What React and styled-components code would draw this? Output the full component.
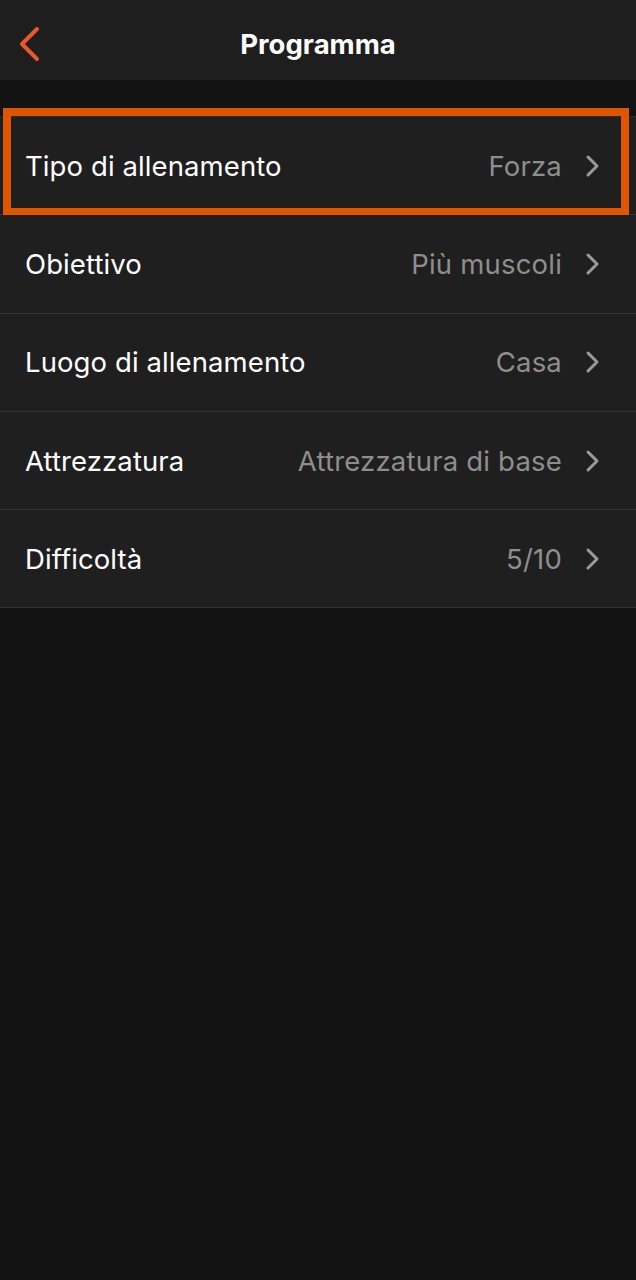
import React from 'react';
import styled, { createGlobalStyle } from 'styled-components';

const GlobalStyle = createGlobalStyle`
  html, body {
    margin: 0;
    padding: 0;
    background: #121212;
    font-family: Inter, "Noto Sans", sans-serif;
  }
`;

const Page = styled.div`
  min-height: 1280px;
  background: #121212;
`;

const Header = styled.header`
  height: 80px;
  box-sizing: border-box;
  padding-top: 8px;
  background: #1e1e1e;
  display: flex;
  align-items: center;
  justify-content: center;
  position: relative;
`;

const BackButton = styled.button`
  position: absolute;
  left: 16px;
  top: 26px;
  width: 26px;
  height: 36px;
  padding: 0;
  border: none;
  background: none;
  display: flex;
`;

const Title = styled.h1`
  margin: 0;
  color: #ffffff;
  font-size: 27.5px;
  font-weight: 700;
`;

const List = styled.div`
  margin-top: 36px;
  border-top: 1px solid #2e2e2e;
`;

const Row = styled.div`
  position: relative;
  height: 97.3px;
  background: #1f1f1f;
  border-bottom: 1px solid #333333;
  display: flex;
  align-items: center;
  padding: 0 36px 0 25px;
`;

const Label = styled.span`
  flex: 1;
  color: #ffffff;
  font-size: 27.5px;
  font-weight: 400;
  letter-spacing: 0.1px;
`;

const Value = styled.span`
  color: #8e8e8e;
  font-size: 27.5px;
  letter-spacing: 0.2px;
  margin-right: 23px;
`;

const Highlight = styled.div`
  position: absolute;
  top: -9px;
  bottom: -2px;
  left: 3px;
  right: 7px;
  border: 8px solid #e05600;
  pointer-events: none;
`;

const Chevron = ({ color = '#9a9a9a' }) => (
  <svg width="15" height="24" viewBox="0 0 15 24" fill="none">
    <path d="M3 3l9 9-9 9" stroke={color} strokeWidth="3" strokeLinecap="round" strokeLinejoin="round" />
  </svg>
);

const rows = [
  { label: 'Tipo di allenamento', value: 'Forza', active: true },
  { label: 'Obiettivo', value: 'Più muscoli' },
  { label: 'Luogo di allenamento', value: 'Casa' },
  { label: 'Attrezzatura', value: 'Attrezzatura di base' },
  { label: 'Difficoltà', value: '5/10' },
];

export default function App() {
  return (
    <Page>
      <GlobalStyle />
      <Header>
        <BackButton aria-label="Indietro">
          <svg width="26" height="36" viewBox="0 0 26 36" fill="none">
            <path d="M21 3L6 18l15 15" stroke="#e8582a" strokeWidth="4" strokeLinecap="round" strokeLinejoin="round" />
          </svg>
        </BackButton>
        <Title>Programma</Title>
      </Header>
      <List>
        {rows.map((r) => (
          <Row key={r.label}>
            <Label>{r.label}</Label>
            <Value>{r.value}</Value>
            <Chevron />
            {r.active && <Highlight />}
          </Row>
        ))}
      </List>
    </Page>
  );
}
